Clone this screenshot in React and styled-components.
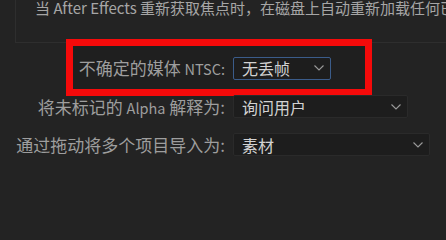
import React from "react";
import styled, { createGlobalStyle } from "styled-components";

// 页面基础样式
const GlobalStyle = createGlobalStyle`
    html, body {
        margin: 0;
        padding: 0;
        background: #232323;
        overflow: hidden;
    }
    body {
        font-family: "Noto Sans CJK SC", "Noto Sans", sans-serif;
        -webkit-font-smoothing: antialiased;
    }
`;

const Page = styled.div`
    width: 446px;
    height: 221px;
    background: #232323;
    overflow: hidden;
`;

// 上方设置分组（只露出底部）
const Panel = styled.div`
    margin-left: 15px;
    height: 42px;
    border-left: 1px solid #2e2e2e;
    border-bottom: 1px solid #2e2e2e;
    white-space: nowrap;
    overflow: hidden;
`;

const PanelText = styled.div`
    padding-left: 19px;
    font-size: 15px;
    line-height: 15px;
    color: #a6a6a6;
`;

// 中文里的英文部分字形较窄
const Latin = styled.span`
    font-size: ${({ $size }) => $size || 14.5}px;
`;

const Form = styled.div`
    position: relative;
    z-index: 0;
    display: grid;
    grid-template-columns: 225px auto;
    column-gap: 8px;
    row-gap: 14.5px;
    padding-top: 13px;
    align-items: center;
`;

// 红色标注框
const Highlight = styled.div`
    position: absolute;
    z-index: -1;
    left: 66px;
    top: -4px;
    width: 306px;
    height: 57px;
    box-sizing: border-box;
    border: 7px solid #f50a0a;
    background: #1f1f1f;
`;

const Label = styled.div`
    text-align: right;
    font-size: 17px;
    line-height: 23px;
    color: #9e9e9e;
    white-space: nowrap;
`;

const Select = styled.div`
    display: flex;
    align-items: center;
    justify-content: space-between;
    box-sizing: border-box;
    width: ${({ $width }) => $width}px;
    height: 23px;
    padding: 0 6px 0 8px;
    background: #1d1d1d;
    border: 1px solid ${({ $focused }) => ($focused ? "#3b5c8a" : "#2a2a2a")};
    border-radius: 2px;
    font-size: 16px;
    color: #d2d2d2;
    white-space: nowrap;
`;

const Chevron = () => (
    <svg width="10" height="6" viewBox="0 0 10 6">
        <path d="M0.5 0.5 L5 5 L9.5 0.5" fill="none" stroke="#9a9a9a" strokeWidth="1.1" />
    </svg>
);

const rows = [
    { label: ["不确定的媒体 ", <Latin key="l">NTSC:</Latin>], key: "ntsc", value: "无丢帧", width: 98, focused: true },
    { label: ["将未标记的 ", <Latin key="l">Alpha</Latin>, " 解释为:"], key: "alpha", value: "询问用户", width: 175 },
    { label: ["通过拖动将多个项目导入为:"], key: "drag", value: "素材", width: 197 },
];

const App = () => {
    return (
        <Page>
            <GlobalStyle />
            <Panel>
                <PanelText>
                    当 <Latin $size={15}>After Effects</Latin> 重新获取焦点时，在磁盘上自动重新加载任何已更改的素材
                </PanelText>
            </Panel>
            <Form>
                <Highlight />
                {rows.map((row) => (
                    <React.Fragment key={row.key}>
                        <Label>{row.label}</Label>
                        <Select $width={row.width} $focused={row.focused}>
                            <span>{row.value}</span>
                            <Chevron />
                        </Select>
                    </React.Fragment>
                ))}
            </Form>
        </Page>
    );
};

export default App;
